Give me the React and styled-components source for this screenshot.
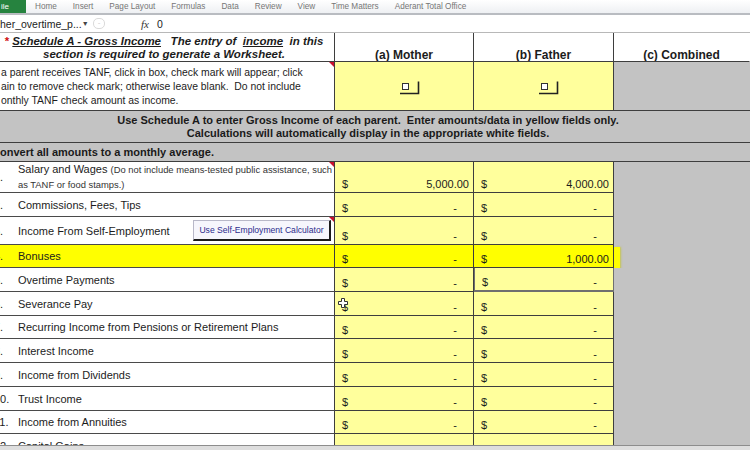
import React from 'react';
import styled, { createGlobalStyle, css } from 'styled-components';

const YELLOW = '#ffff9c';
const HILITE = '#ffff00';
const GRAY = '#c3c3c3';
const LINE = '#3e3e3e';
const COLS = '335px 139px 140px 136px';

const GlobalStyle = createGlobalStyle`
  html, body {
    margin: 0;
    padding: 0;
    background: #fff;
  }
  body {
    width: 750px;
    height: 450px;
    overflow: hidden;
    font-family: 'Liberation Sans', Arial, sans-serif;
    color: #1c1c1c;
  }
  * {
    box-sizing: border-box;
  }
`;

const Page = styled.div`
  display: flex;
  flex-direction: column;
  width: 750px;
  height: 450px;
  overflow: hidden;
`;

/* ribbon + formula bar */

const Ribbon = styled.div`
  display: flex;
  align-items: center;
  gap: 16px;
  height: 15px;
  background: linear-gradient(#ffffff, #eef0f3);
  border-bottom: 2px solid #b9bcc1;
`;
const FileTab = styled.div`
  width: 26px;
  height: 13px;
  margin-right: -7px;
  background: #26833f;
  color: #fff;
  font-size: 8px;
  line-height: 13px;
  padding-left: 1px;
`;
const Tab = styled.span`
  font-size: 8.2px;
  color: #767676;
  white-space: nowrap;
`;

const FormulaBar = styled.div`
  display: flex;
  align-items: center;
  height: 18px;
  border-bottom: 1px solid #b8b8b8;
  background: #fff;
  font-size: 10.5px;
`;
const NameBox = styled.div`
  display: flex;
  align-items: center;
  justify-content: space-between;
  width: 88px;
  padding-right: 2px;
  white-space: nowrap;
`;
const Caret = styled.span`
  font-size: 7px;
  color: #444;
`;
const DimButton = styled.span`
  width: 12px;
  height: 11px;
  margin-left: 5px;
  border: 1px solid #dadada;
  border-radius: 5px;
  color: #cfcfcf;
  font-size: 8px;
  line-height: 7px;
  text-align: center;
`;
const Fx = styled.span`
  margin-left: 36px;
  font-family: 'Liberation Serif', serif;
  font-style: italic;
  font-size: 11px;
  color: #333;
`;
const FormulaValue = styled.span`
  margin-left: 8px;
  font-size: 10.5px;
`;

/* sheet */

const Sheet = styled.div`
  height: 412px;
  overflow: hidden;
`;

const Row = styled.div`
  position: relative;
  display: grid;
  grid-template-columns: ${COLS};
  height: ${p => p.h}px;
  ${p =>
    p.hl &&
    css`
      &::after {
        content: '';
        position: absolute;
        left: 614px;
        top: 2px;
        width: 6px;
        height: ${p.h}px;
        background: ${HILITE};
        box-shadow: 1px 0 2px rgba(200, 200, 0, 0.6);
      }
    `}
`;

const FullRow = styled.div`
  display: flex;
  flex-direction: column;
  justify-content: center;
  height: ${p => p.h}px;
  background: ${GRAY};
  border-bottom: 1px solid ${LINE};
  font-size: 11px;
  font-weight: bold;
  line-height: 13px;
  color: #1a1a1a;
  white-space: nowrap;
  ${p =>
    p.center &&
    css`
      align-items: center;
      padding-right: 14px;
    `}
`;

const Cell = styled.div`
  position: relative;
  display: flex;
  border-bottom: 1px solid ${LINE};
  border-right: 1px solid ${LINE};
  overflow: hidden;
  ${p =>
    p.note &&
    css`
      &::after {
        content: '';
        position: absolute;
        top: 0;
        right: 0;
        border-top: 5px solid #c8102e;
        border-left: 5px solid transparent;
      }
    `}
`;

const TitleCell = styled(Cell)`
  flex-direction: column;
  align-items: center;
  justify-content: center;
  padding: 2px 6px 0 0;
  font-size: 11.5px;
  font-weight: bold;
  font-style: italic;
  line-height: 13px;
  white-space: pre;
`;
const Star = styled.span`
  color: #d01010;
  font-style: normal;
`;
const U = styled.span`
  text-decoration: underline;
`;

const ColHead = styled(Cell)`
  justify-content: center;
  align-items: flex-end;
  padding-bottom: 1px;
  font-size: 12px;
  font-weight: bold;
  line-height: 10px;
  border-right-color: ${p => (p.last ? 'transparent' : LINE)};
`;

const NoteCell = styled(Cell)`
  flex-direction: column;
  justify-content: center;
  padding: 2px 0 0 1px;
  font-size: 10.4px;
  line-height: 14px;
  white-space: pre;
`;

const CheckCell = styled(Cell)`
  align-items: center;
  justify-content: center;
  padding-left: 11px;
  padding-top: 2px;
  background: ${YELLOW};
`;

const GrayCell = styled.div`
  background: ${GRAY};
  border-bottom: ${p => (p.lined ? `1px solid ${LINE}` : 'none')};
`;

const LabelCell = styled(Cell)`
  align-items: center;
  background: ${p => (p.hl ? HILITE : '#fff')};
  border-bottom-color: #4a4a4a;
  font-size: 11px;
  line-height: 14px;
  white-space: nowrap;
`;
const Num = styled.span`
  flex: none;
  width: 24px;
  margin-left: -6px;
`;
const Label = styled.span`
  flex: none;
`;
const Small = styled.span`
  font-size: 9.4px;
  color: #333;
`;

const CalcButton = styled.div`
  margin-left: auto;
  margin-right: 3px;
  width: 138px;
  height: 21px;
  display: flex;
  align-items: center;
  justify-content: center;
  background: #f6f6fc;
  border: 1px solid #b8b8c8;
  border-right: 2px solid #1b1b1b;
  border-bottom: 2px solid #1b1b1b;
  font-size: 8.6px;
  color: #2b2b8c;
`;

const MoneyCell = styled(Cell)`
  justify-content: space-between;
  align-items: flex-end;
  padding: 0 4px 1px 7px;
  background: ${p => (p.hl ? HILITE : YELLOW)};
  font-size: 11px;
  line-height: 13px;
  ${p =>
    p.active &&
    css`
      border-left: 1px solid #6f6f6f;
      border-bottom: 2px solid #6f6f6f;
      border-right-color: #6f6f6f;
    `}
`;
const Amount = styled.span`
  padding-right: ${p => (p.dash ? 12 : 0)}px;
`;

const Cursor = styled.svg`
  position: absolute;
  left: 3px;
  top: 6px;
`;

const BottomStrip = styled.div`
  height: 5px;
  border-top: 1px solid #8d8d8d;
  background: #dedede;
`;

const TABS = [
  'Home',
  'Insert',
  'Page Layout',
  'Formulas',
  'Data',
  'Review',
  'View',
  'Time Matters',
  'Aderant Total Office',
];

const ROWS = [
  { n: '1.', label: 'Salary and Wages', small: true, h: 31, m: '5,000.00', f: '4,000.00', note: true },
  { n: '2.', label: 'Commissions, Fees, Tips', h: 24 },
  { n: '3.', label: 'Income From Self-Employment', h: 28, button: true, note: true },
  { n: '4.', label: 'Bonuses', h: 23, f: '1,000.00', hl: true },
  { n: '5.', label: 'Overtime Payments', h: 24, active: true },
  { n: '6.', label: 'Severance Pay', h: 24, cursor: true },
  { n: '7.', label: 'Recurring Income from Pensions or Retirement Plans', h: 23 },
  { n: '8.', label: 'Interest Income', h: 24 },
  { n: '9.', label: 'Income from Dividends', h: 24 },
  { n: '10.', label: 'Trust Income', h: 24 },
  { n: '11.', label: 'Income from Annuities', h: 23 },
  { n: '12.', label: 'Capital Gains', h: 24 },
];

function CheckBox() {
  return (
    <svg width="22" height="15" viewBox="0 0 22 15">
      <rect x="3.5" y="3.5" width="6" height="6" fill="#fff" stroke="#333" />
      <path d="M1 13.5 H19.5 V1.5" fill="none" stroke="#222" strokeWidth="1.6" />
    </svg>
  );
}

function Money({ value, hl, active, children }) {
  return (
    <MoneyCell hl={hl} active={active}>
      {children}
      <span>$</span>
      <Amount dash={!value}>{value || '-'}</Amount>
    </MoneyCell>
  );
}

function IncomeRow({ row }) {
  return (
    <Row h={row.h} hl={row.hl}>
      <LabelCell hl={row.hl} note={row.note}>
        <Num>{row.n}</Num>
        {row.small ? (
          <Label>
            Salary and Wages <Small>(Do not include means-tested public assistance, such</Small>
            <br />
            <Small>as TANF or food stamps.)</Small>
          </Label>
        ) : (
          <Label>{row.label}</Label>
        )}
        {row.button && <CalcButton>Use Self-Employment Calculator</CalcButton>}
      </LabelCell>
      <Money value={row.m} hl={row.hl}>
        {row.cursor && (
          <Cursor width="10" height="10" viewBox="0 0 10 10">
            <path
              d="M3.5 0.5 H6.5 V3.5 H9.5 V6.5 H6.5 V9.5 H3.5 V6.5 H0.5 V3.5 H3.5 Z"
              fill="#fff"
              stroke="#333"
            />
          </Cursor>
        )}
      </Money>
      <Money value={row.f} hl={row.hl} active={row.active} />
      <GrayCell />
    </Row>
  );
}

export default function App() {
  return (
    <Page>
      <GlobalStyle />
      <Ribbon>
        <FileTab>ile</FileTab>
        {TABS.map(t => (
          <Tab key={t}>{t}</Tab>
        ))}
      </Ribbon>
      <FormulaBar>
        <NameBox>
          <span>her_overtime_p...</span>
          <Caret>▼</Caret>
        </NameBox>
        <DimButton>-</DimButton>
        <Fx>fx</Fx>
        <FormulaValue>0</FormulaValue>
      </FormulaBar>

      <Sheet>
        <Row h={29}>
          <TitleCell>
            <span>
              <Star>* </Star>
              <U>Schedule A - Gross Income</U>
              {'   The entry of  '}
              <U>income</U>
              {'  in this'}
            </span>
            <span>section is required to generate a Worksheet.</span>
          </TitleCell>
          <ColHead>(a) Mother</ColHead>
          <ColHead>(b) Father</ColHead>
          <ColHead last>(c) Combined</ColHead>
        </Row>

        <Row h={49}>
          <NoteCell note>
            <span>a parent receives TANF, click in box, check mark will appear; click</span>
            <span>ain to remove check mark; otherwise leave blank.  Do not include</span>
            <span>onthly TANF check amount as income.</span>
          </NoteCell>
          <CheckCell>
            <CheckBox />
          </CheckCell>
          <CheckCell>
            <CheckBox />
          </CheckCell>
          <GrayCell lined />
        </Row>

        <FullRow h={32} center>
          <span>Use Schedule A to enter Gross Income of each parent.&nbsp; Enter amounts/data in yellow fields only.</span>
          <span>Calculations will automatically display in the appropriate white fields.</span>
        </FullRow>

        <FullRow h={19}>
          <span>onvert all amounts to a monthly average.</span>
        </FullRow>

        {ROWS.map(r => (
          <IncomeRow key={r.n} row={r} />
        ))}
      </Sheet>
      <BottomStrip />
    </Page>
  );
}
